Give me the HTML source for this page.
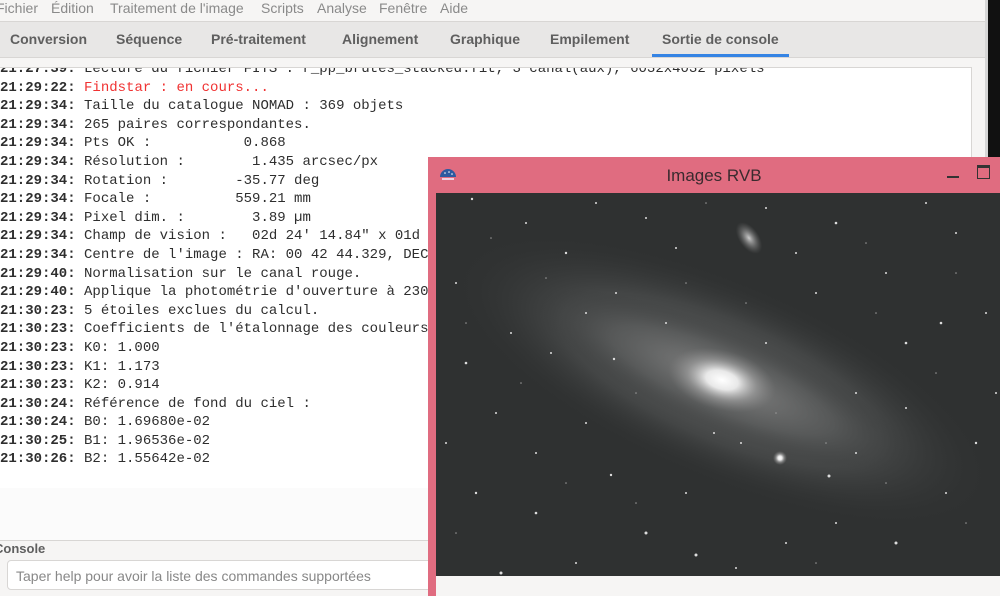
<!DOCTYPE html>
<html><head><meta charset="utf-8"><style>
body{margin:0;width:1000px;height:596px;overflow:hidden;background:#f6f5f4;font-family:"Liberation Sans",sans-serif;position:relative}
.menu{position:absolute;top:0;left:0;width:986px;height:21px;background:#f6f5f4;font-size:14px;color:#8a8a8a}
.menu span{position:absolute;top:0px}
.tabs{position:absolute;top:21px;left:0;width:986px;height:35px;background:#e8e7e6;border-top:1px solid #d8d6d4;border-bottom:1px solid #d8d6d4}
.tabs span{position:absolute;top:9px;font-size:14px;font-weight:bold;color:#5f5f5f}
.tabs .act{border-bottom:3px solid #3584e4;padding:0 10px 7px;margin-left:-10px}
.rs{position:absolute;right:0;top:0;width:12px;height:160px;background:#111}
.rs2{position:absolute;right:12px;top:0;width:3px;height:160px;background:#d6d6d6}
.log{position:absolute;left:0;top:67px;width:971px;height:420px;background:#fff;border:1px solid #d8d6d4;border-left:none;overflow:hidden}
.log pre{margin:0;position:absolute;top:-8px;left:0;font-family:"Liberation Mono",monospace;font-size:14px;line-height:18.6px;color:#2e2e2e}
.log b{font-weight:bold}
.red{color:#f03232}
.below{position:absolute;left:0;top:488px;width:986px;height:52px;background:#fbfbfb;border-bottom:1px solid #d8d6d4}
.clabel{position:absolute;left:-6px;top:541px;font-size:13px;font-weight:bold;color:#5f5f5f}
.input{position:absolute;left:7px;top:560px;width:440px;height:30px;background:#fff;border:1px solid #d8d6d4;border-radius:4px;font-size:14px;color:#888;line-height:30px;padding-left:8px;box-sizing:border-box}
.win{position:absolute;left:428px;top:157px;width:572px;height:439px;background:#e06c80}
.title{position:absolute;left:0;top:0;width:572px;height:36px;text-align:center;font-size:17px;color:#3a2a2e;line-height:38px}
.img{position:absolute;left:8px;top:36px;width:564px;height:383px;background:#2f3131;overflow:hidden}
.bot{position:absolute;left:8px;top:419px;width:564px;height:20px;background:#f6f5f4}
</style></head><body>
<div class="menu">
<span style="left:-4px">Fichier</span><span style="left:51px">Édition</span><span style="left:110px">Traitement de l'image</span><span style="left:261px">Scripts</span><span style="left:317px">Analyse</span><span style="left:379px">Fenêtre</span><span style="left:440px">Aide</span>
</div>
<div class="tabs">
<span style="left:10px">Conversion</span><span style="left:116px">Séquence</span><span style="left:211px">Pré-traitement</span><span style="left:342px">Alignement</span><span style="left:450px">Graphique</span><span style="left:550px">Empilement</span><span class="act" style="left:662px">Sortie de console</span>
</div>
<div class="rs2"></div><div class="rs"></div>
<div class="log"><pre><b>21:27:39:</b> Lecture du fichier FITS : r_pp_brutes_stacked.fit, 3 canal(aux), 6032x4032 pixels
<b>21:29:22:</b> <span class="red">Findstar : en cours...</span>
<b>21:29:34:</b> Taille du catalogue NOMAD : 369 objets
<b>21:29:34:</b> 265 paires correspondantes.
<b>21:29:34:</b> Pts OK :           0.868
<b>21:29:34:</b> Résolution :        1.435 arcsec/px
<b>21:29:34:</b> Rotation :        -35.77 deg
<b>21:29:34:</b> Focale :          559.21 mm
<b>21:29:34:</b> Pixel dim. :        3.89 µm
<b>21:29:34:</b> Champ de vision :   02d 24' 14.84" x 01d
<b>21:29:34:</b> Centre de l'image : RA: 00 42 44.329, DEC
<b>21:29:40:</b> Normalisation sur le canal rouge.
<b>21:29:40:</b> Applique la photométrie d'ouverture à 230
<b>21:30:23:</b> 5 étoiles exclues du calcul.
<b>21:30:23:</b> Coefficients de l'étalonnage des couleurs
<b>21:30:23:</b> K0: 1.000
<b>21:30:23:</b> K1: 1.173
<b>21:30:23:</b> K2: 0.914
<b>21:30:24:</b> Référence de fond du ciel :
<b>21:30:24:</b> B0: 1.69680e-02
<b>21:30:25:</b> B1: 1.96536e-02
<b>21:30:26:</b> B2: 1.55642e-02</pre></div>
<div class="below"></div>
<div class="clabel">Console</div>
<div class="input">Taper help pour avoir la liste des commandes supportées</div>
<div class="win">
<div class="title">Images RVB</div>
<svg style="position:absolute;left:11px;top:10px" width="18" height="14"><path d="M1 10 A8 8 0 0 1 17 10 Z" fill="#2c5aa0"/><rect x="3" y="11" width="12" height="2" fill="#f0d0e0"/><circle cx="6" cy="6" r="0.8" fill="#fff"/><circle cx="10" cy="5" r="0.8" fill="#fff"/><circle cx="13" cy="7" r="0.8" fill="#fff"/></svg>
<div style="position:absolute;left:519px;top:19px;width:12px;height:2px;background:#333"></div>
<div style="position:absolute;left:549px;top:8px;width:11px;height:10px;border:1.5px solid #333;border-top-width:3px"></div>
<div class="img">
<svg width="564" height="383">
<defs>
<radialGradient id="g1"><stop offset="0" stop-color="#8a8a8a" stop-opacity=".7"/><stop offset=".6" stop-color="#626464" stop-opacity=".4"/><stop offset="1" stop-color="#303232" stop-opacity="0"/></radialGradient>
<radialGradient id="g2"><stop offset="0" stop-color="#fff"/><stop offset=".3" stop-color="#e8e8e8"/><stop offset=".65" stop-color="#aaa" stop-opacity=".5"/><stop offset="1" stop-color="#888" stop-opacity="0"/></radialGradient>
<radialGradient id="g3"><stop offset="0" stop-color="#ccc"/><stop offset="1" stop-color="#777" stop-opacity="0"/></radialGradient>
</defs>
<ellipse cx="286" cy="187" rx="290" ry="100" fill="url(#g1)" transform="rotate(23 286 187)"/>
<ellipse cx="286" cy="187" rx="200" ry="50" fill="url(#g1)" transform="rotate(23 286 187)"/>
<ellipse cx="286" cy="187" rx="55" ry="30" fill="url(#g2)" transform="rotate(15 286 187)"/>
<ellipse cx="313" cy="45" rx="10" ry="18" fill="url(#g3)" transform="rotate(-35 313 45)"/>
<circle cx="344" cy="265" r="7" fill="url(#g2)"/>
<g fill="#ddd">
<circle cx="36" cy="6" r="1.2"/><circle cx="90" cy="30" r="1"/><circle cx="130" cy="60" r="1.2"/><circle cx="210" cy="25" r="1"/><circle cx="180" cy="100" r="1"/><circle cx="330" cy="15" r="1"/><circle cx="400" cy="30" r="1.3"/><circle cx="450" cy="80" r="1"/><circle cx="520" cy="40" r="1"/><circle cx="550" cy="120" r="1"/><circle cx="470" cy="150" r="1.3"/><circle cx="505" cy="130" r="1.3"/><circle cx="30" cy="170" r="1.3"/><circle cx="60" cy="220" r="1"/><circle cx="115" cy="160" r="1"/><circle cx="178" cy="166" r="1.2"/><circle cx="100" cy="260" r="1"/><circle cx="150" cy="230" r="1"/><circle cx="40" cy="300" r="1.2"/><circle cx="100" cy="320" r="1.3"/><circle cx="175" cy="282" r="1.2"/><circle cx="210" cy="340" r="1.5"/><circle cx="260" cy="362" r="1.5"/><circle cx="393" cy="283" r="1.5"/><circle cx="400" cy="330" r="1"/><circle cx="460" cy="350" r="1.5"/><circle cx="510" cy="300" r="1"/><circle cx="540" cy="250" r="1.2"/><circle cx="470" cy="215" r="1"/><circle cx="420" cy="200" r="1"/><circle cx="305" cy="250" r="1"/><circle cx="278" cy="240" r="1"/><circle cx="65" cy="380" r="1.5"/><circle cx="140" cy="370" r="1"/><circle cx="300" cy="375" r="1"/><circle cx="350" cy="350" r="1"/><circle cx="240" cy="55" r="1"/><circle cx="150" cy="120" r="1"/><circle cx="380" cy="100" r="1"/><circle cx="420" cy="260" r="1"/><circle cx="20" cy="90" r="1"/><circle cx="75" cy="140" r="1"/><circle cx="560" cy="200" r="1"/><circle cx="230" cy="130" r="1"/><circle cx="330" cy="150" r="1"/><circle cx="10" cy="250" r="1"/><circle cx="250" cy="300" r="1"/><circle cx="490" cy="10" r="1"/><circle cx="160" cy="10" r="1"/><circle cx="360" cy="60" r="1"/>
</g>
<g fill="#999">
<circle cx="55" cy="45" r=".8"/><circle cx="110" cy="85" r=".8"/><circle cx="250" cy="90" r=".8"/><circle cx="310" cy="110" r=".8"/><circle cx="440" cy="120" r=".8"/><circle cx="500" cy="180" r=".8"/><circle cx="30" cy="130" r=".8"/><circle cx="85" cy="190" r=".8"/><circle cx="200" cy="200" r=".8"/><circle cx="340" cy="220" r=".8"/><circle cx="390" cy="250" r=".8"/><circle cx="130" cy="290" r=".8"/><circle cx="200" cy="310" r=".8"/><circle cx="450" cy="290" r=".8"/><circle cx="530" cy="330" r=".8"/><circle cx="20" cy="340" r=".8"/><circle cx="380" cy="370" r=".8"/><circle cx="520" cy="80" r=".8"/><circle cx="270" cy="10" r=".8"/><circle cx="430" cy="50" r=".8"/>
</g>
</svg>
</div>
<div class="bot"></div>
</div>
</body></html>
